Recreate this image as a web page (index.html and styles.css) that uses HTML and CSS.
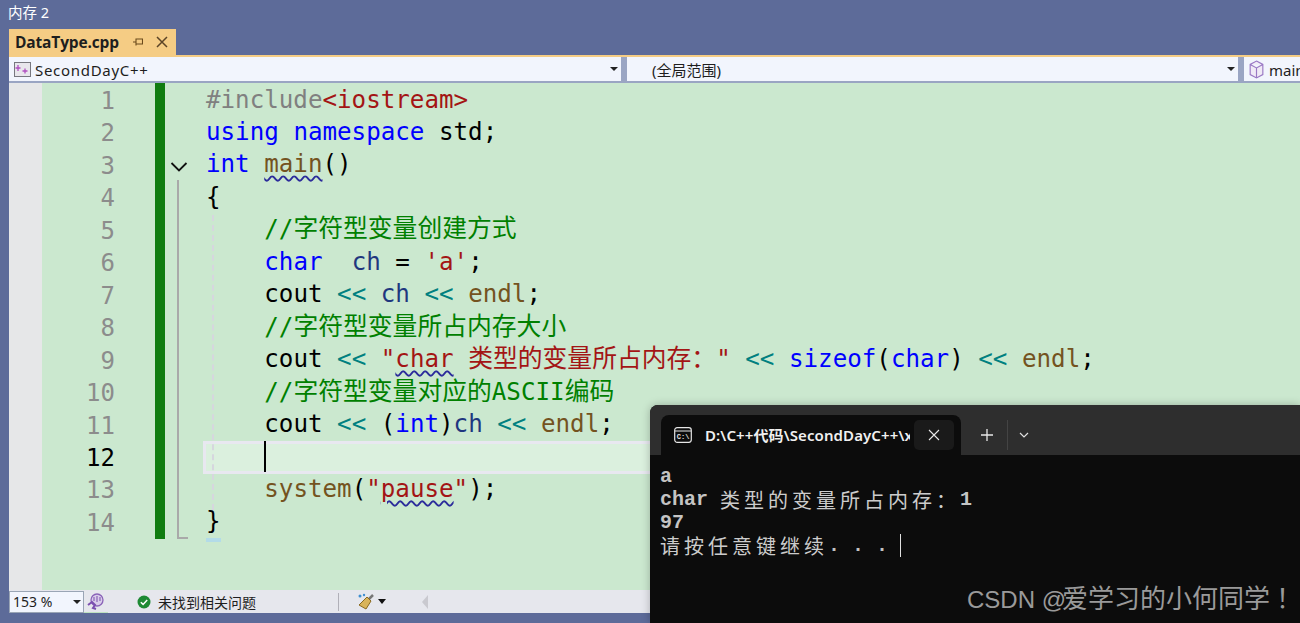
FILE: index.html
```html
<!DOCTYPE html>
<html lang="zh">
<head>
<meta charset="utf-8">
<title>DataType.cpp</title>
<link rel="stylesheet" href="styles.css">
</head>
<body>
<div class="ide">
  <div class="titlebar">内存 2</div>
  <div class="tabstrip">
    <div class="tab">
      <span class="tab-name">DataType.cpp</span>
      <svg class="pin" viewBox="0 0 10 8" width="10" height="8"><path d="M0 4h3M3 0.500v7M3 1h6.500v5H3" fill="none" stroke="#6b4a1c" stroke-width="1.100"/></svg>
      <svg class="tab-x" viewBox="0 0 12 12" width="12" height="12"><path d="M1 1l10 10M11 1L1 11" fill="none" stroke="#5c4426" stroke-width="1.500"/></svg>
    </div>
  </div>
  <div class="main-area">
    <div class="navbar">
      <div class="combo combo-project">
        <svg class="nav-icon" viewBox="0 0 17 15" width="17" height="15"><rect x="0.500" y="0.500" width="16" height="14" fill="#e8e6ec" stroke="#77777f"/><path d="M4 3v6M1.500 6h5M11 6.500v5M8.500 9h5" stroke="#b04fc0" stroke-width="1.300" fill="none"/></svg>
        <span class="combo-text project-text">SecondDayC++</span>
        <span class="caret-down"></span>
      </div>
      <div class="combo combo-scope">
        <span class="combo-text scope-text">(全局范围)</span>
        <span class="caret-down"></span>
      </div>
      <div class="combo combo-member">
        <svg class="cube" viewBox="0 0 14 18" width="15" height="19"><path d="M7 1l6 3.200v9.600L7 17l-6-3.200V4.200zM1 4.200l6 3.300 6-3.300M7 7.500V17" fill="#f0eaf6" stroke="#9a78c4" stroke-width="1.100"/></svg>
        <span class="combo-text">main</span>
      </div>
    </div>
    <div class="editor">
      <div class="gutter"></div>
      <div class="numbers">
        <div class="ln">1</div><div class="ln">2</div><div class="ln">3</div><div class="ln">4</div><div class="ln">5</div><div class="ln">6</div><div class="ln">7</div><div class="ln">8</div><div class="ln">9</div><div class="ln">10</div><div class="ln">11</div><div class="ln active">12</div><div class="ln">13</div><div class="ln">14</div>
      </div>
      <div class="changebar"></div>
      <div class="fold">
        <svg class="chevron" viewBox="0 0 18 12" width="18" height="12"><path d="M1.500 2l7.500 7.500L16.500 2" fill="none" stroke="#111" stroke-width="1.800"/></svg>
        <div class="fold-line"></div>
      </div>
      <div class="code">
        <div class="guide"></div>
        <div class="cl"><span class="pp">#include</span><span class="str">&lt;iostream&gt;</span></div>
        <div class="cl"><span class="kw">using</span> <span class="kw">namespace</span> std;</div>
        <div class="cl"><span class="kw">int</span> <span class="fn wavy">main</span>()</div>
        <div class="cl">{</div>
        <div class="cl in"><span class="com">//<span class="cjk">字符型变量创建方式</span></span></div>
        <div class="cl in"><span class="kw">char</span>  <span class="var">ch</span> = <span class="str">'a'</span>;</div>
        <div class="cl in">cout <span class="op">&lt;&lt;</span> <span class="var">ch</span> <span class="op">&lt;&lt;</span> <span class="fn">endl</span>;</div>
        <div class="cl in"><span class="com">//<span class="cjk">字符型变量所占内存大小</span></span></div>
        <div class="cl in">cout <span class="op">&lt;&lt;</span> <span class="str">"<span class="wavy">char</span> <span class="cjk">类型的变量所占内存：</span>"</span> <span class="op">&lt;&lt;</span> <span class="kw">sizeof</span>(<span class="kw">char</span>) <span class="op">&lt;&lt;</span> <span class="fn">endl</span>;</div>
        <div class="cl in"><span class="com">//<span class="cjk">字符型变量对应的</span>ASCII<span class="cjk">编码</span></span></div>
        <div class="cl in">cout <span class="op">&lt;&lt;</span> (<span class="kw">int</span>)<span class="var">ch</span> <span class="op">&lt;&lt;</span> <span class="fn">endl</span>;</div>
        <div class="cl in current"><span class="text-caret"></span></div>
        <div class="cl in"><span class="fn">system</span>(<span class="str">"<span class="wavy">pause</span>"</span>);</div>
        <div class="cl">}<span class="brace-mark"></span></div>
      </div>
    </div>
    <div class="statusbar">
      <div class="zoom-box"><span>153 %</span><span class="caret-down"></span></div>
      <div class="copilot-wrap">
        <svg class="copilot" viewBox="0 0 18 18" width="18" height="18"><circle cx="10" cy="8" r="6" fill="#d9cdea" stroke="#8a63b8" stroke-width="1.300"/><path d="M7 5v4M10 4v6M13 5v4" stroke="#8a63b8" stroke-width="1.200"/><path d="M1 13l4-3 3 3-2 3 3 1" fill="none" stroke="#7b4fb0" stroke-width="2"/></svg>
      </div>
      <div class="issues">
        <svg viewBox="0 0 14 14" width="14" height="14"><circle cx="7" cy="7" r="6.500" fill="#1e8a34"/><path d="M3.800 7.200l2.300 2.200 4.100-4.400" fill="none" stroke="#fff" stroke-width="1.500"/></svg>
        <span>未找到相关问题</span>
      </div>
      <div class="divider"></div>
      <svg class="brush" viewBox="0 0 18 18" width="18" height="18"><path d="M16 2l-5 5" stroke="#777" stroke-width="2.500"/><path d="M10 4l4 4-5 8-7-4z" fill="#d9b45a" stroke="#8a6a20" stroke-width="1"/><circle cx="3" cy="3" r="1.500" fill="#3f8fd0"/><circle cx="7" cy="2" r="1.200" fill="#3f8fd0"/></svg>
      <span class="caret-down big"></span>
      <span class="scroll-left"></span>
    </div>
  </div>
</div>
<div class="terminal">
  <div class="term-tabs">
    <div class="term-tab">
      <svg viewBox="0 0 18 16" width="18" height="16"><rect x="0.700" y="0.700" width="16.600" height="14.600" rx="2.500" fill="none" stroke="#e6e6e6" stroke-width="1.200"/><path d="M1 4h16" stroke="#e6e6e6"/><text x="2.800" y="11.800" class="cmd-glyph">C:\</text></svg>
      <span class="term-title">D:\C++代码\SecondDayC++\x64\Debug</span>
      <span class="term-close"><svg viewBox="0 0 12 12" width="12" height="12"><path d="M1 1l10 10M11 1L1 11" stroke="#e8e8e8" stroke-width="1.100" fill="none"/></svg></span>
    </div>
    <svg class="term-plus" viewBox="0 0 12 12" width="12" height="12"><path d="M6 0v12M0 6h12" stroke="#e8e8e8" stroke-width="1.300"/></svg>
    <span class="term-sep"></span>
    <svg class="term-chev" viewBox="0 0 10 6" width="10" height="6"><path d="M1 1l4 4 4-4" stroke="#e0e0e0" stroke-width="1.200" fill="none"/></svg>
  </div>
  <div class="term-body">
    <div class="tl">a</div>
    <div class="tl">char <span class="tc">类型的变量所占内存：</span>1</div>
    <div class="tl">97</div>
    <div class="tl"><span class="tc">请按任意键继续</span><span>. . . </span><span class="term-cursor"></span></div>
  </div>
</div>
<div class="watermark">CSDN @<span class="wm-cjk">爱学习的小何同学</span><span class="wm-bang">！</span></div>
</body>
</html>
```
FILE: styles.css
```css
* { box-sizing: border-box; }
html, body { margin: 0; padding: 0; height: 623px; overflow: hidden; background: #5d6b99; }
body { position: relative; font-family: "Noto Sans CJK SC", "Noto Sans", sans-serif; }
.ide { display: flex; flex-direction: column; height: 623px; padding: 0 0 10px 9px; }
.titlebar { height: 29px; padding-top: 1px; margin-left: -1px; color: #fff; font: 14.500px/22px "Noto Sans", "Noto Sans CJK SC", sans-serif; }
.tabstrip { height: 26px; display: flex; }
.tab { width: 167px; background: #f5cc84; display: flex; align-items: center; padding: 0 7px 0 6px; }
.tab-name { font: 700 15.500px/26px "Open Sans", "Noto Sans", sans-serif; color: #1e1e1e; flex: 1; letter-spacing: -0.150px; white-space: nowrap; }
.pin { margin-right: 13px; flex: none; }
.tab-x { flex: none; margin-right: 1px; }
.main-area { flex: 1; display: flex; flex-direction: column; border-top: 2px solid #f5cc84; min-height: 0; }
.navbar { height: 26px; display: flex; gap: 6px; background: #9aa5c3; padding-bottom: 2px; flex: none; }
.combo { background: #f2f5fd; display: flex; align-items: center; height: 24px; position: relative; }
.combo-project { width: 612px; padding-left: 5px; }
.combo-scope { width: 611px; }
.combo-member { flex: 1; padding-left: 5px; min-width: 0; }
.nav-icon { margin-right: 4px; flex: none; }
.cube { margin-right: 5px; flex: none; }
.combo-text { font: 15px/22px "Noto Sans", "Noto Sans CJK SC", sans-serif; color: #1e1e1e; flex: 1; padding-top: 2px; }
.project-text { letter-spacing: 0.700px; }
.scope-text { padding-left: 25px; }
.combo-member .combo-text { white-space: nowrap; overflow: hidden; }
.caret-down { width: 0; height: 0; border-left: 4px solid transparent; border-right: 4px solid transparent; border-top: 4px solid #222; margin-right: 3px; flex: none; }
.editor { flex: 1; display: flex; background: #cbe8cf; min-height: 0; position: relative; }
.gutter { width: 33px; background: #e6e7e8; flex: none; }
.numbers { width: 73px; flex: none; padding-top: 2px; }
.ln { height: 32.460px; text-align: right; font: 24px/32.460px "DejaVu Sans Mono", monospace; color: #8c8c8c; }
.ln.active { color: #000; }
.changebar { width: 10px; margin-left: 40px; height: 456px; background: #107c10; flex: none; }
.fold { width: 41px; flex: none; position: relative; }
.chevron { margin: 78px 0 0 5px; display: block; }
.fold-line { margin: 7px 0 0 12px; width: 11px; height: 359px; border-left: 2px solid #a9a9a9; border-bottom: 2px solid #a9a9a9; }
.code { flex: 1; padding-top: 0.500px; position: relative; min-width: 0; }
.guide { position: absolute; left: 6px; top: 132px; height: 295px; border-left: 2px dashed #d6d6de; z-index: 1; }
.cl { height: 32.460px; font: 24.200px/32.460px "DejaVu Sans Mono", monospace; white-space: pre; color: #000; position: relative; }
.cl.in { padding-left: 58.300px; }
.cjk { font-family: "Noto Sans CJK SC", sans-serif; font-size: 24.800px; line-height: 0; }
.pp { color: #808080; }
.kw { color: #0000ff; }
.str { color: #a31515; }
.com { color: #008000; }
.fn { color: #74531f; }
.var { color: #1f377f; }
.op { color: #008080; }
.wavy { text-decoration: underline wavy #2b2b9b 1.500px; text-underline-offset: 3px; }
.cl.current { background: #dbf0de; border: 3px solid #e8e8f0; border-right: 0; margin-left: -3px; top: 1px; }
.text-caret { display: block; width: 2px; height: 30.500px; background: #000; margin-top: -3px; }
.brace-mark { position: absolute; left: 0; top: 33px; width: 15px; height: 4px; background: #b3dbe8; }
.statusbar { height: 23px; flex: none; background: #e6e7ed; display: flex; align-items: center; }
.zoom-box { width: 75px; height: 22px; background: #f2f5fd; border: 1px solid #9aa5b5; display: flex; align-items: center; justify-content: space-between; padding-left: 3px; font: 14px/20px "Noto Sans", sans-serif; color: #1e1e1e; }
.zoom-box .caret-down { margin-right: 2px; }
.copilot-wrap { width: 24px; height: 23px; display: flex; align-items: center; justify-content: center; border-bottom: 1px solid #bfe3c0; }
.issues { display: flex; align-items: center; gap: 7px; margin-left: 29px; font: 14px/20px "Noto Sans CJK SC", sans-serif; color: #1e1e1e; }
.issues svg { flex: none; }
.divider { width: 1px; height: 18px; background: #b0b0b8; margin-left: 82px; }
.brush { margin-left: 18px; flex: none; }
.caret-down.big { margin-left: 3px; border-left-width: 4.500px; border-right-width: 4.500px; border-top-width: 5px; border-top-color: #111; }
.scroll-left { margin-left: 33px; width: 0; height: 0; border-top: 7px solid transparent; border-bottom: 7px solid transparent; border-right: 6px solid #c9c9cf; }
.terminal { position: absolute; left: 650px; top: 405px; width: 650px; height: 218px; background: #0c0c0c; border-radius: 8px 0 0 0; display: flex; flex-direction: column; box-shadow: 0 0 8px rgba(0,0,0,0.25); overflow: hidden; }
.term-tabs { height: 50px; flex: none; background: #2e2e2e; display: flex; align-items: center; padding: 10px 0 0 11px; }
.term-tab { width: 300px; height: 40px; background: #0c0c0c; border-radius: 8px 8px 0 0; display: flex; align-items: center; padding: 0 6px 0 13px; margin-right: 20px; flex: none; }
.term-tab svg { flex: none; }
.cmd-glyph { font: 700 7px "Liberation Mono", monospace; fill: #e6e6e6; }
.term-title { margin-left: 13px; width: 205px; overflow: hidden; white-space: nowrap; font: 600 15px/20px "Noto Sans", "Noto Sans CJK SC", sans-serif; color: #f0f0f0; flex: none; letter-spacing: 0.100px; }
.term-close { width: 40px; height: 30px; background: #1a1a1a; border-radius: 5px; display: flex; align-items: center; justify-content: center; margin-left: 4px; flex: none; }
.term-plus { flex: none; }
.term-sep { width: 1px; height: 30px; background: #444; margin: 0 11px 0 14px; flex: none; }
.term-chev { flex: none; }
.term-body { padding: 10px 0 0 10px; }
.tl { height: 23px; font: 700 20px/23px "Liberation Mono", monospace; color: #c4c4c4; white-space: pre; display: flex; align-items: center; }
.tc { font: 400 20px/23px "Noto Sans CJK SC", sans-serif; letter-spacing: 4px; color: #cccccc; }
.term-cursor { width: 1px; height: 23px; background: #e0e0e0; }
.watermark { position: absolute; left: 967px; top: 583px; font: 24px/34px "Liberation Sans", sans-serif; color: #9a9a9a; white-space: nowrap; }
.wm-cjk { font-family: "Noto Sans CJK SC", sans-serif; font-size: 26px; line-height: 0; margin-left: -4px; }
.wm-bang { font-family: "Noto Sans CJK SC", sans-serif; font-size: 26px; line-height: 0; margin-left: 6px; }
```
